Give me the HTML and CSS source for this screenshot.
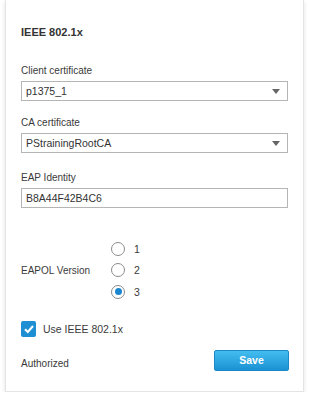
FILE: index.html
```html
<!DOCTYPE html>
<html lang="en">
<head>
    <meta charset="UTF-8">
    <meta name="viewport" content="width=device-width, initial-scale=1.0">
    <title>IEEE 802.1x</title>
    <link rel="stylesheet" href="styles.css">
</head>
<body>
    <div class="panel">
        <h2 class="panel-title">IEEE 802.1x</h2>

        <div class="field field-first">
            <div class="field-label">Client certificate</div>
            <div class="select-box">
                <span>p1375_1</span>
                <span class="caret"></span>
            </div>
        </div>

        <div class="field field-ca">
            <div class="field-label">CA certificate</div>
            <div class="select-box">
                <span>PStrainingRootCA</span>
                <span class="caret"></span>
            </div>
        </div>

        <div class="field field-eap">
            <div class="field-label">EAP Identity</div>
            <div class="text-box">B8A44F42B4C6</div>
        </div>

        <div class="eapol">
            <div class="eapol-label">EAPOL Version</div>
            <div class="radio-list">
                <div class="radio-row"><span class="radio"></span>1</div>
                <div class="radio-row"><span class="radio"></span>2</div>
                <div class="radio-row"><span class="radio checked"></span>3</div>
            </div>
        </div>

        <div class="check-row">
            <span class="checkbox">
                <svg width="12" height="12" viewBox="0 0 12 12"><path d="M2 6.2 L4.8 9 L10 3" fill="none" stroke="#fff" stroke-width="2"/></svg>
            </span>
            Use IEEE 802.1x
        </div>

        <div class="footer">
            <span class="status">Authorized</span>
            <button class="save-btn">Save</button>
        </div>
    </div>
</body>
</html>
```

FILE: styles.css
```css
body {
    margin: 0;
    background-color: #fff;
    font-family: 'Liberation Sans', Arial, sans-serif;
    color: #3a3a3a;
}

.panel {
    width: 267px;
    margin: 0 7px 0 5px;
    padding: 25px 15px 20px 15px;
    background-color: #fff;
    border: 1px solid #e4e4e4;
    border-top: none;
    box-shadow: 0 2px 4px rgba(0, 0, 0, 0.12);
}

.panel-title {
    margin: 0;
    font-size: 11px;
    line-height: 14px;
    font-weight: bold;
    color: #333;
}

.field-first {
    margin-top: 25px;
}

.field-ca {
    margin-top: 15px;
}

.field-eap {
    margin-top: 18px;
}

.field-label {
    font-size: 10px;
    line-height: 14px;
    margin-bottom: 3px;
}

.select-box,
.text-box {
    display: flex;
    align-items: center;
    justify-content: space-between;
    height: 18px;
    padding: 0 7px 0 4px;
    border: 1px solid #b5b5b5;
    font-size: 10.5px;
    color: #333;
}

.caret {
    width: 0;
    height: 0;
    border-left: 4px solid transparent;
    border-right: 4px solid transparent;
    border-top: 5px solid #666;
}

/* EAPOL version radios */
.eapol {
    display: flex;
    align-items: center;
    margin-top: 30px;
}

.eapol-label {
    width: 90px;
    font-size: 10px;
}

.radio-list {
    display: flex;
    flex-direction: column;
}

.radio-row {
    display: flex;
    align-items: center;
    height: 21.5px;
    font-size: 10.5px;
}

.radio {
    box-sizing: border-box;
    width: 14px;
    height: 14px;
    margin-right: 9px;
    border: 1px solid #8c8c8c;
    border-radius: 50%;
    background-color: #fff;
    display: flex;
    align-items: center;
    justify-content: center;
}

.radio.checked::after {
    content: "";
    width: 7px;
    height: 7px;
    border-radius: 50%;
    background-color: #1a86d0;
}

/* checkbox row */
.check-row {
    display: flex;
    align-items: center;
    margin-top: 18px;
    font-size: 10.5px;
}

.checkbox {
    display: flex;
    align-items: center;
    justify-content: center;
    width: 15px;
    height: 16px;
    margin-right: 7px;
    border-radius: 2px;
    background-color: #1e8fd3;
}

.footer {
    display: flex;
    align-items: center;
    justify-content: space-between;
    margin-top: 13px;
}

.status {
    font-size: 10px;
    padding-top: 6px;
}

.save-btn {
    width: 75px;
    height: 21px;
    margin-right: -1px;
    padding: 0;
    border: 1px solid #1c88c6;
    border-radius: 2px;
    background: linear-gradient(#43bdf0, #1b92d3);
    color: #fff;
    font-family: 'Liberation Sans', Arial, sans-serif;
    font-size: 10.5px;
    font-weight: bold;
}
```
